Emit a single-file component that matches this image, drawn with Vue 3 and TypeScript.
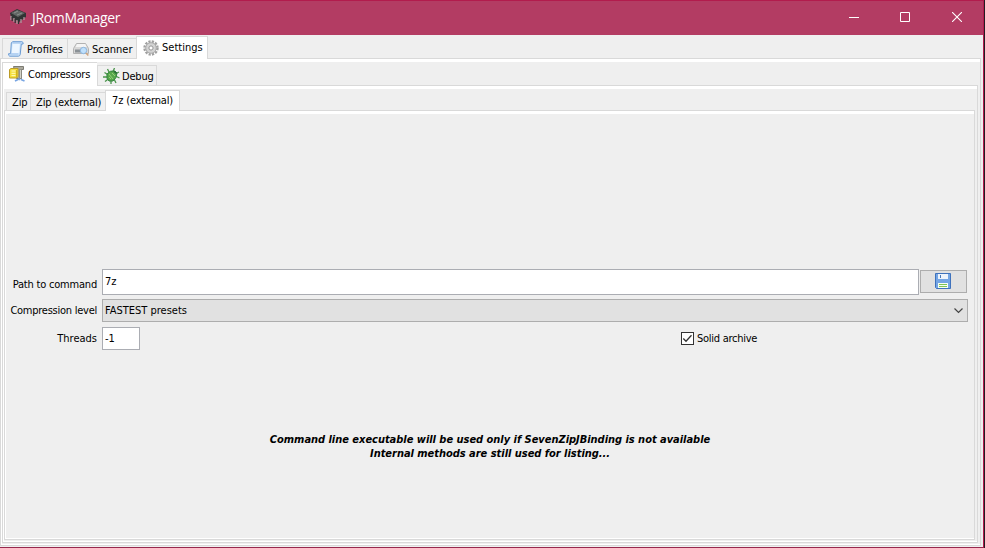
<script setup lang="ts">
import { ref } from 'vue'

const command = ref('7z')
const threads = ref('-1')
const solid = ref(true)
</script>

<template>
  <div class="desktop">
    <div class="window">
      <header class="titlebar">
        <svg class="app-icon" width="18" height="18" viewBox="0 0 18 18">
          <path d="M1 5 8 1 17 5 17 9 10 14 2 9Z" fill="#303434" />
          <path d="M2 5 8 2 16 5 9 9Z" fill="#626765" />
          <path d="M5 5 9 3M8 7l5-2" stroke="#8b908d" />
          <path d="M2 8v4M5 10v4M8 12v4M12 11v4M15 9v3" stroke="#aaa3a4" stroke-width="1.2" />
          <path d="M3.2 9v4M6.2 11v4M9.5 12v4" stroke="#2c3030" stroke-width="1.2" />
        </svg>
        <h1>JRomManager</h1>
        <div class="controls">
          <svg class="minimize" width="10" height="10" viewBox="0 0 10 10"><path d="M0 5.5h10" stroke="#fff" /></svg>
          <svg width="10" height="10" viewBox="0 0 10 10"><path d="M.5.5h9v9h-9z" fill="none" stroke="#fff" /></svg>
          <svg width="10" height="10" viewBox="0 0 10 10"><path d="M0 0l10 10M10 0 0 10" stroke="#fff" stroke-width="1.1" /></svg>
        </div>
      </header>
      <nav class="tabs main-tabs">
        <div class="tab profiles">
          <svg width="16" height="16" viewBox="0 0 16 16">
            <path d="M4.5.7h9.4q1.7.4 1.2 2.3h-1.8l-1.1 10.5q-.4 1.7-1.8 1.7H1.7q-1.4-.5-1.1-2.5h2L3.3 2z" fill="#cfe4fb" stroke="#6a9bd3" />
            <path d="M4.7 2.5h7.2L10.7 12H3.8z" fill="#edf6ff" /><path d="M2.5 13h7.8M4.5 2h8.8" stroke="#9cc1ea" />
          </svg><span>Profiles</span>
        </div>
        <div class="tab scanner">
          <svg width="16" height="16" viewBox="0 0 16 16">
            <path d="M3.5 2.5h9l3 5v5H.5v-5z" fill="#d8d8d8" stroke="#b2b2b2" /><path d="M4 3h8.2l1.5 3H2.5z" fill="#f4f4f4" />
            <path d="M2 8.5h7v3H2z" fill="#8b9196" /><circle cx="10.5" cy="9.5" r="3.2" fill="#c0e0fb" stroke="#8cb5de" /><path d="m13 12 2.3 2.5" stroke="#d1a47b" stroke-width="1.5" />
          </svg><span>Scanner</span>
        </div>
        <div class="tab settings selected">
          <svg width="16" height="16" viewBox="0 0 16 16">
            <circle cx="8" cy="8" r="6.5" fill="none" stroke="#a0a0a0" stroke-width="2.4" stroke-dasharray="2.2 1.2" />
            <circle cx="8" cy="8" r="5.3" fill="#d3d3d3" stroke="#aaa" /><circle cx="8" cy="8" r="2.1" fill="#fff" stroke="#979797" />
          </svg><span>Settings</span>
        </div>
      </nav>
      <section class="pane pane-main">
        <nav class="tabs sub-tabs">
          <div class="tab compressors selected">
            <svg width="16" height="16" viewBox="0 0 16 16">
              <path d="M4.5.5h10v3h-2v9h-5z" fill="#aaa99e" stroke="#7c7b72" />
              <path d="M10.5 3.5h2v9h-2z" fill="#d4d3c8" stroke="#77776f" stroke-width=".6" />
              <path d="M.5 3.5 2 2.5h7v8L7.5 12h-7z" fill="#f5df3b" stroke="#bb9b27" />
              <path d="M2.5 5h4M2.5 7.3h4M2.5 9.6h4" stroke="#fffac2" /><path d="M7.5 4v7" stroke="#d3b31a" />
              <path d="m6 15 4-2 1 1m1-.5 3.5 1.5" fill="none" stroke="#79a6e3" stroke-width="1.7" />
            </svg><span>Compressors</span>
          </div>
          <div class="tab debug">
            <svg width="17" height="16" viewBox="0 0 17 16">
              <path d="M4.5 1l2 4M1.5 4.5l4 2.5M0 9h5M2 13.5l4-3M8 16v-4M13 15l-2-4M16.5 10l-4-2M16 4l-4 2M11.5 0 9.5 5" stroke="#4a944b" stroke-width="1.3" />
              <path d="M4 6Q7 2 12 3L14 5Q14 10 10 13L6 13Q3 11 4 6Z" fill="#58a84c" stroke="#348340" />
              <path d="m6 6 4 5M6 9l2 2M9 5l3 3" stroke="#94d078" />
              <path d="m11 3.5 2.5 2" stroke="#286936" stroke-width="1.5" />
            </svg><span>Debug</span>
          </div>
        </nav>
        <section class="pane pane-sub">
          <nav class="tabs type-tabs">
            <div class="tab zip"><span>Zip</span></div>
            <div class="tab zip-ext"><span>Zip (external)</span></div>
            <div class="tab seven selected"><span>7z (external)</span></div>
          </nav>
          <section class="pane pane-form">
            <div class="row path-row">
              <label class="path-label" for="cmd">Path to command</label>
              <input id="cmd" v-model="command" type="text" />
              <button type="button">
                <svg width="16" height="16" viewBox="0 0 16 16">
                  <path d="M.5.5h15v15h-14l-1-1z" fill="#74a5e4" stroke="#3f72bc" /><path d="M3 1h10v5H3z" fill="#edf3fb" /><path d="M5 2h1v3H5z" fill="#4b79b8" />
                  <path d="M3 10h10v5H3z" fill="#f7fff3" /><path d="M4 11.5h8M4 13.5h8" stroke="#7fc356" />
                </svg>
              </button>
            </div>
            <div class="row level-row">
              <label class="level-label">Compression level</label>
              <div class="combo"><span>FASTEST presets</span>
                <svg width="9" height="6" viewBox="0 0 9 6"><path d="m.5.5 4 4 4-4" fill="none" stroke="#444" stroke-width="1.2" /></svg>
              </div>
            </div>
            <div class="row threads-row">
              <label class="threads-label" for="threads">Threads</label>
              <input id="threads" v-model="threads" type="text" />
              <div class="check" @click="solid = !solid">
                <span class="box"><svg v-if="solid" width="11" height="11" viewBox="0 0 11 11"><path d="m1.3 5.5 2.7 2.7 5.5-6" fill="none" stroke="#333" stroke-width="1.3" /></svg></span>
                <span class="check-label">Solid archive</span>
              </div>
            </div>
            <div class="note">
              <p class="note-first">Command line executable will be used only if SevenZipJBinding is not available</p>
              <p class="note-second">Internal methods are still used for listing...</p>
            </div>
          </section>
        </section>
      </section>
    </div>
  </div>
</template>

<style>
body { overflow: hidden; }
</style>

<style scoped>
* { box-sizing: border-box; }
.desktop { width: 985px; height: 548px; background: #241c22; padding-right: 1px; font: 11px/14px "DejaVu Sans Condensed", "DejaVu Sans", sans-serif; font-stretch: condensed; color: #000; }
.window { width: 984px; height: 548px; display: flex; flex-direction: column; background: #efefef; border: 1px solid #b21c4d; border-left: 0; border-bottom-color: #96284d; }
.titlebar { height: 34px; flex: none; display: flex; align-items: center; background: #b33c63; padding-left: 9px; color: #fff; }
.app-icon { margin-top: -3px; }
h1 { margin: 0 0 0 5px; font: 14px/20px "Open Sans", sans-serif; letter-spacing: -.32px; }
.controls { margin-left: auto; display: flex; gap: 42px; padding-right: 21px; margin-top: -2px; }
.controls svg { display: block; }
.controls .minimize { margin-right: -1px; }
.tabs { display: flex; align-items: flex-end; flex: none; }
.tab { display: flex; align-items: center; border: 1px solid #d9d9d9; border-bottom: 0; border-right: 0; background: #f0f0f0; white-space: nowrap; }
.tab:last-child { border-right: 1px solid #d9d9d9; }
.tab span { display: block; padding-top: 2px; }
.tab svg { flex: none; }
.tab.selected { background: #fff; position: relative; margin-bottom: -1px; }
.tab.selected span { padding-top: 1px; }
.main-tabs { height: 23px; padding-left: 2px; }
.main-tabs .tab { height: 20px; padding-left: 5px; gap: 3px; }
.main-tabs .selected { height: 23px; padding-left: 6px; padding-bottom: 1px; }
.profiles { width: 65px; }
.scanner { width: 69px; }
.settings { width: 72px; }
.pane { display: flex; flex-direction: column; border: 1px solid #d9d9d9; box-shadow: inset 0 3px #fff, inset 1px 0 #fff, inset 0 -1px #fff; }
.pane-main { width: 981px; height: 488px; }
.sub-tabs { height: 26px; padding-left: 1px; }
.sub-tabs .tab { height: 20px; padding-left: 5px; gap: 2px; }
.sub-tabs .selected { height: 24px; padding-left: 6px; padding-bottom: 1px; gap: 3px; }
.compressors { width: 95px; letter-spacing: -.2px; }
.debug { width: 60px; letter-spacing: -.2px; }
.pane-sub { width: 976px; height: 458px; margin-left: 1px; }
.type-tabs { height: 24px; padding-left: 3px; }
.type-tabs .tab { height: 18px; padding-left: 5px; letter-spacing: -.15px; }
.type-tabs .selected { height: 21px; padding-left: 6px; padding-bottom: 2px; }
.zip { width: 24px; }
.zip-ext { width: 75px; }
.seven { width: 75px; }
.pane-form { width: 971px; height: 430px; margin-left: 1px; padding-top: 158px; }
.row { display: flex; flex: none; }
.row label { width: 92px; text-align: right; margin-right: 5px; white-space: nowrap; }
.row .path-label { letter-spacing: -.2px; }
.row .level-label { letter-spacing: -.25px; }
input { font: inherit; color: #000; border: 1px solid #abadb3; background: #fff; padding: 0 2px; outline: 0; margin: 0; border-radius: 0; }
.path-row { height: 26px; }
.path-row label { padding-top: 9px; }
.path-row input { width: 817px; height: 26px; padding-bottom: 2px; }
button { width: 47px; height: 23px; margin: 1px 0 0 1px; display: flex; align-items: center; justify-content: center; padding: 0 2px 1px 0; border: 1px solid #adadad; background: #e1e1e1; }
.level-row { margin-top: 4px; }
.level-row label { padding-top: 5px; }
.combo { width: 866px; height: 23px; border: 1px solid #adadad; background: #e1e1e1; display: flex; align-items: center; justify-content: space-between; padding: 0 4px 0 2px; }
.threads-row { margin-top: 5px; }
.threads-row label { padding-top: 5px; }
.threads-row input { width: 38px; height: 23px; }
.check { display: flex; align-items: center; margin-left: 541px; }
.box { width: 13px; height: 13px; border: 1px solid #333; background: #fff; display: flex; }
.check-label { margin-left: 3px; letter-spacing: -.27px; }
.note { margin-top: 83px; text-align: center; font-weight: bold; font-style: italic; white-space: nowrap; letter-spacing: -.03px; padding-left: 1px; }
p { margin: 0; }
</style>
